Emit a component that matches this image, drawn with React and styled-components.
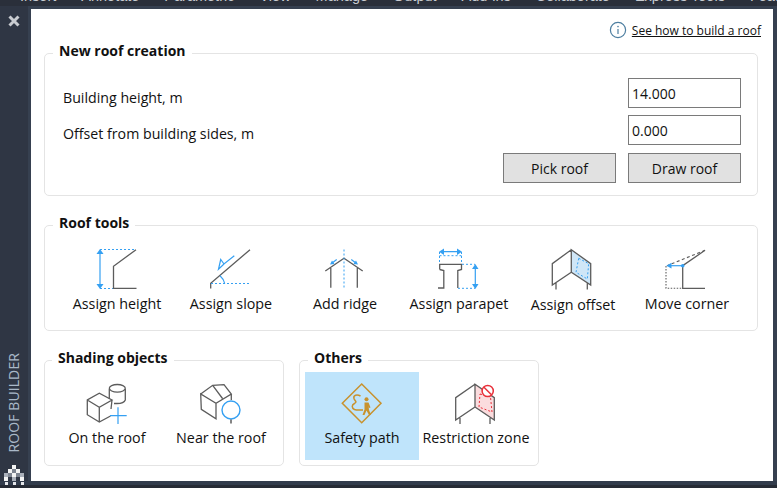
import React from "react"
import styled, { createGlobalStyle } from "styled-components"

const Global = createGlobalStyle`
html, body { margin: 0; padding: 0; background: #2f3745; }
* { box-sizing: border-box; }
`

const Frame = styled.div`
width: 777px;
height: 488px;
overflow: hidden;
background: #262b35;
display: flex;
flex-direction: column;
font-family: "Open Sans", "Noto Sans", sans-serif;
color: #111;
`
const MenuStrip = styled.div`
height: 6px;
flex: none;
background: #2a2f3a;
overflow: hidden;
display: flex;
gap: 25px;
padding-left: 20px;
font-family: "Liberation Sans", sans-serif;
font-size: 14.5px;
line-height: 14px;
color: #c8ccd2;
white-space: nowrap;
`
const MenuItem = styled.span`
margin-top: -11px;
`
const Body = styled.div`
flex: none;
height: 475px;
padding-top: 3px;
display: flex;
background: #364050;
`
const BottomEdge = styled.div`
height: 4px;
flex: none;
background: #323c4c;
`
const Sidebar = styled.div`
width: 28px;
flex: none;
background: #2f3644;
margin-top: -3px;
margin-right: 3px;
display: flex;
flex-direction: column;
align-items: center;
padding-top: 9px;
position: relative;
z-index: 1;
`
const Close = styled.svg`
width: 12px;
height: 12px;
flex: none;
`
const SideLabel = styled.div`
margin-top: auto;
writing-mode: vertical-rl;
transform: rotate(180deg);
font-size: 14px;
line-height: 16px;
letter-spacing: 0.1px;
color: #a9b8c8;
white-space: nowrap;
`
const Logo = styled.svg`
width: 22px;
height: 20px;
flex: none;
margin-top: 12px;
margin-bottom: -4px;
`
const Win = styled.div`
width: 742px;
height: 472px;
flex: none;
background: #fff;
padding: 0 15px 0 13px;
`
const LinkRow = styled.div`
height: 44px;
padding-top: 12px;
margin-right: -3px;
display: flex;
justify-content: flex-end;
align-items: flex-start;
gap: 5px;
`
const Link = styled.a`
font-size: 12px;
line-height: 20px;
color: #111;
text-decoration: underline;
`
const Section = styled.div`
border: 1px solid #e4e4e4;
border-radius: 5px;
height: ${p => p.$h}px;
width: ${p => p.$w ? p.$w + "px" : "auto"};
margin-bottom: ${p => p.$mb || 0}px;
padding-left: ${p => p.$pl || 0}px;
background: #fff;
`
const Title = styled.div`
width: fit-content;
height: 20px;
margin: -13px 0 0 ${p => p.$ml || 8}px;
padding: 0 6px;
background: #fff;
font-size: 14px;
line-height: 20px;
font-weight: 700;
`
const Form = styled.div`
margin-top: 17px;
padding: 0 16px 0 18px;
display: flex;
flex-direction: column;
gap: 7px;
`
const FormRow = styled.div`
display: flex;
justify-content: space-between;
`
const FieldLabel = styled.label`
font-size: 14.2px;
line-height: 20px;
padding-top: ${p => p.$top}px;
`
const Input = styled.div`
width: 113px;
height: 30px;
border: 1px solid #7a7a7a;
padding-left: 3px;
font-size: 14px;
line-height: 29px;
background: #fff;
`
const Buttons = styled.div`
display: flex;
justify-content: flex-end;
gap: 12px;
margin-top: 1px;
`
const Button = styled.button`
width: 113px;
height: 30px;
padding: 0;
border: 1px solid #7a7a7a;
background: #e1e1e1;
font-family: inherit;
font-size: 14px;
color: #111;
`
const Cells = styled.div`
display: flex;
margin-top: ${p => p.$top}px;
padding-left: ${p => p.$left || 0}px;
`
const Cell = styled.div`
width: 114px;
height: 88px;
flex: none;
padding-top: 8px;
background: ${p => p.$active ? "#bfe4fb" : "transparent"};
display: flex;
flex-direction: column;
align-items: center;
`
const Icon = styled.svg`
width: 114px;
height: 48px;
flex: none;
fill: none;
`
const CellLabel = styled.div`
font-size: 14.3px;
line-height: 20px;
white-space: nowrap;
margin-top: ${p => p.$drop || 0}px;
`
const BottomRow = styled.div`
display: flex;
gap: 15px;
`

const GREY = "#5c5c5c"
const BLUE = "#35a0f2"

const Grey = props => <path stroke={GREY} strokeWidth="1.3" {...props} />
const Dots = ({ color = BLUE, ...props }) => <path stroke={color} strokeWidth="1" strokeDasharray="2 2" {...props} />
const Blue = props => <path stroke={BLUE} strokeWidth="1.2" {...props} />
const Head = ({ points, color = BLUE }) => <polygon points={points} fill={color} />

const AssignHeight = () => (
  <Icon viewBox="0 0 114 48">
    <Dots d="M40 3.5H76M40 42.5H53" />
    <Blue d="M40 5V41" />
    <Head points="40,3 36.5,8 43.5,8" />
    <Head points="40,43 36.5,38 43.5,38" />
    <Grey d="M76 3.7L53.5 20.3V42.3H76.5" />
  </Icon>
)

const AssignSlope = () => (
  <Icon viewBox="0 0 114 48">
    <Grey d="M76 3.7L36.7 37.3V42.5" />
    <Dots d="M37 37.5H76" />
    <Blue d="M46 29.7Q49.8 33 50.7 37.5" />
    <Blue d="M60.3 9.7L50 18L46.7 13.5L44.5 23.3L50 18" />
  </Icon>
)

const AddRidge = () => (
  <Icon viewBox="0 0 114 48">
    <Grey d="M37.3 25L56 12.3L74.7 25M42.8 22V41.7M69.3 22V41.7" />
    <Dots d="M56 3.5V42" />
    <Blue d="M48.7 13.5L43.5 17.5M63.3 13.5L68.5 17.5" />
    <Head points="42,18.5 46.5,18 44,14.5" />
    <Head points="70,18.5 65.5,18 68,14.5" />
  </Icon>
)

const AssignParapet = () => (
  <Icon viewBox="0 0 114 48">
    <Dots d="M37.5 6V18M59.5 6V18M37.5 9.7H59.5M60 18.3H73M56 42.3H73" />
    <Blue d="M39 5.7H58M73.3 20V41" />
    <Head points="37,5.7 42,2.5 42,9" />
    <Head points="60,5.7 55,2.5 55,9" />
    <Head points="73.3,18 70,23 76.5,23" />
    <Head points="73.3,43 70,38 76.5,38" />
    <Grey d="M37.7 23.5V18.3H59.5V23.5L55.8 24.5V42M37.7 23.5L41.8 24.5V42H36" />
  </Icon>
)

const AssignOffset = () => (
  <Icon viewBox="0 0 114 48">
    <polygon points="55.3,3.7 74.7,17.7 74.7,39 55.3,26.3" fill="#cfe6f7" />
    <Dots d="M62.7 12.3L72.7 17.7L71.3 33L60 26.3Z" />
    <Grey d="M55.3 3.7L36.3 17.7V39L55.3 26.3L74.7 39V17.7L55.3 3.7V26.3M40 37V43.5M71.3 37V43.5" />
  </Icon>
)

const MoveCorner = () => (
  <Icon viewBox="0 0 114 48">
    <Grey d="M75 4.3L52.7 19.7V42.3H75" />
    <path d="M75 4.3L37 19.7" stroke={GREY} strokeWidth="1.1" strokeDasharray="3 2.5" />
    <path d="M36 20V42.3H52.7" stroke={GREY} strokeWidth="1.1" strokeDasharray="1.5 1.5" />
    <Blue d="M40 19.7H52.7" />
    <Head points="36.5,19.7 41.5,16.8 41.5,22.6" />
    <circle cx="52.7" cy="19.7" r="1.8" fill={BLUE} />
  </Icon>
)

const OnRoof = () => (
  <Icon viewBox="0 0 114 48">
    <Grey d="M60.5 36L49.3 42L37.3 34.7V20L49.3 13.3L62 20L49.3 27.3L37.3 20M49.3 27.3V42M62 20L61 29" />
    <Grey d="M59.3 9V19M75.3 9V20Q74 23.5 67 23.5H64" />
    <ellipse cx="67.3" cy="8.3" rx="8" ry="3.8" stroke={GREY} strokeWidth="1.3" />
    <Blue d="M60 35.7H76.7M68 27.3V44" />
  </Icon>
)

const NearRoof = () => (
  <Icon viewBox="0 0 114 48">
    <Grey d="M36.7 14L48.7 5.3L60 4.7L67.3 14L52 23.3L36.7 14L37.3 29.3L52 38.7V23.3M48.7 5.3L58.5 18.5M67.3 14V20" />
    <circle cx="67" cy="30" r="9" fill="#fff" stroke={BLUE} strokeWidth="1.4" />
    <path d="M67 39.5V43.5" stroke={GREY} strokeWidth="1.5" />
  </Icon>
)

const SafetyPath = () => (
  <Icon viewBox="0 0 114 48">
    <g stroke="#c8922e" strokeWidth="1.5">
      <path d="M56.7 4L76 23.3L56.7 42.7L37.3 23.3Z" />
      <path d="M55.5 16C52 14 48 15 49 18.5C50 21.5 52.5 21.5 49.5 23.5C46.5 25 46.5 28 49.5 29.5C52 30.5 55 30 58 30" />
    </g>
    <circle cx="61.5" cy="19.3" r="2" fill="#c8922e" />
    <path d="M59.5 22.5H63.5L65.5 27.5L64 28L63.5 25.5L64 30L66 35H64L61.5 30.5L59.5 35H57.5L59.5 29.5Z" fill="#c8922e" />
  </Icon>
)

const RestrictionZone = () => (
  <Icon viewBox="0 0 114 48">
    <polygon points="56,4.3 75.3,17.7 75.3,40 56,27" fill="#fbdcde" />
    <Dots color="#e8303a" d="M61 14L71.5 17L73 32L60 27Z" />
    <Grey d="M56 4.3L36.7 17.7V40L56 27L75.3 40V17.7L56 4.3V27M41 38V44M71 38V44" />
    <circle cx="68.7" cy="11" r="5.6" fill="#fff" stroke="#e8303a" strokeWidth="1.5" />
    <path d="M65 7.2L72.5 14.8" stroke="#e8303a" strokeWidth="1.5" />
  </Icon>
)

const menu = ["Insert", "Annotate", "Parametric", "View", "Manage", "Output", "Add-ins", "Collaborate", "Express Tools", "Featured Apps"]

// logo squares: x, y, w, h, colour
const logoCells = [
  [9, 0, 4, 4, "#f4f4f4"],
  [5, 4, 4, 4, "#f4f4f4"], [13, 4, 4, 4, "#f4f4f4"], [9, 4, 4, 4, "#7d8490"],
  [9, 8, 4, 4, "#f4f4f4"], [5, 8, 4, 4, "#7d8490"], [13, 8, 4, 4, "#7d8490"], [1, 8, 4, 4, "#aab0ba"], [17, 8, 4, 4, "#aab0ba"],
  [1, 12, 4, 4, "#f4f4f4"], [17, 12, 4, 4, "#f4f4f4"], [9, 12, 4, 4, "#aab0ba"],
  [2, 17, 3, 3, "#e4e6ea"], [10, 17, 3, 3, "#e4e6ea"], [18, 17, 3, 3, "#e4e6ea"]
]

const App = () => {
  return (
    <Frame>
      <Global />
      <MenuStrip>
        {menu.map(m => <MenuItem key={m}>{m}</MenuItem>)}
      </MenuStrip>
      <Body>
        <Sidebar>
          <Close viewBox="0 0 12 12">
            <path d="M1.5 1.5L10.5 10.5M10.5 1.5L1.5 10.5" stroke="#c9ccd1" strokeWidth="3" />
          </Close>
          <SideLabel>ROOF BUILDER</SideLabel>
          <Logo viewBox="0 0 22 20">
            {logoCells.map(([x, y, w, h, c]) => (
              <rect key={x + "-" + y} x={x} y={y} width={w} height={h} fill={c} />
            ))}
          </Logo>
        </Sidebar>
        <Win>
          <LinkRow>
            <svg width="18" height="18" viewBox="0 0 18 18">
              <circle cx="9" cy="9" r="7.6" fill="none" stroke="#4d7ea0" strokeWidth="1.2" />
              <path d="M9 8V13" stroke="#4d7ea0" strokeWidth="1.2" />
              <circle cx="9" cy="5.6" r="0.8" fill="#4d7ea0" />
            </svg>
            <Link>See how to build a roof</Link>
          </LinkRow>

          <Section $h={143} $mb={29}>
            <Title>New roof creation</Title>
            <Form>
              <FormRow>
                <FieldLabel $top={10}>Building height, m</FieldLabel>
                <Input>14.000</Input>
              </FormRow>
              <FormRow>
                <FieldLabel $top={9}>Offset from building sides, m</FieldLabel>
                <Input>0.000</Input>
              </FormRow>
              <Buttons>
                <Button>Pick roof</Button>
                <Button>Draw roof</Button>
              </Buttons>
            </Form>
          </Section>

          <Section $h={106} $mb={29}>
            <Title>Roof tools</Title>
            <Cells $top={5} $left={15}>
              <Cell><AssignHeight /><CellLabel>Assign height</CellLabel></Cell>
              <Cell><AssignSlope /><CellLabel>Assign slope</CellLabel></Cell>
              <Cell><AddRidge /><CellLabel>Add ridge</CellLabel></Cell>
              <Cell><AssignParapet /><CellLabel>Assign parapet</CellLabel></Cell>
              <Cell><AssignOffset /><CellLabel $drop={1}>Assign offset</CellLabel></Cell>
              <Cell><MoveCorner /><CellLabel>Move corner</CellLabel></Cell>
            </Cells>
          </Section>

          <BottomRow>
            <Section $h={106} $w={240} $pl={5}>
              <Title $ml={2}>Shading objects</Title>
              <Cells $top={4}>
                <Cell><OnRoof /><CellLabel>On the roof</CellLabel></Cell>
                <Cell><NearRoof /><CellLabel>Near the roof</CellLabel></Cell>
              </Cells>
            </Section>
            <Section $h={106} $w={240} $pl={5}>
              <Title $ml={3}>Others</Title>
              <Cells $top={4}>
                <Cell $active><SafetyPath /><CellLabel>Safety path</CellLabel></Cell>
                <Cell><RestrictionZone /><CellLabel>Restriction zone</CellLabel></Cell>
              </Cells>
            </Section>
          </BottomRow>
        </Win>
      </Body>
      <BottomEdge />
    </Frame>
  )
}

export default App
